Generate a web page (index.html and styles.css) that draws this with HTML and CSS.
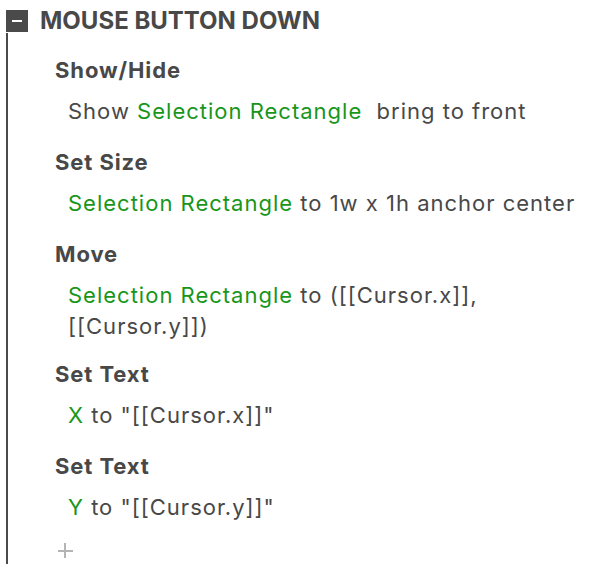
FILE: index.html
```html
<!DOCTYPE html>
<html>
<head>
<meta charset="utf-8">
<link rel="stylesheet" href="styles.css">
</head>
<body>
<div class="event">
  <div class="event-head">
    <span class="toggle"><span class="minus"></span></span>
    <span class="event-title">MOUSE BUTTON DOWN</span>
  </div>
  <div class="actions">
    <div class="action">
      <div class="action-name">Show/Hide</div>
      <div class="action-body">Show <span class="obj">Selection Rectangle</span>&nbsp; bring to front</div>
    </div>
    <div class="action">
      <div class="action-name">Set Size</div>
      <div class="action-body"><span class="obj">Selection Rectangle</span> to 1w x 1h anchor center</div>
    </div>
    <div class="action action-multiline">
      <div class="action-name">Move</div>
      <div class="action-body"><span class="obj">Selection Rectangle</span> to ([[Cursor.x]],<br>[[Cursor.y]])</div>
    </div>
    <div class="action">
      <div class="action-name">Set Text</div>
      <div class="action-body"><span class="obj">X</span> to "[[Cursor.x]]"</div>
    </div>
    <div class="action">
      <div class="action-name">Set Text</div>
      <div class="action-body"><span class="obj">Y</span> to "[[Cursor.y]]"</div>
    </div>
    <div class="add"><span class="plus"></span></div>
  </div>
</div>
</body>
</html>
```
FILE: styles.css
```css
html, body {
  margin: 0;
  padding: 0;
  background: #ffffff;
}
body {
  font-family: Inter, "Noto Sans", sans-serif;
  color: #484848;
  width: 592px;
  height: 564px;
  overflow: hidden;
}
.event {
  height: 100%;
  display: flex;
  flex-direction: column;
}
.event-head {
  display: flex;
  align-items: center;
  padding-top: 8px;
  height: 25px;
  flex: none;
}
.toggle {
  width: 22px;
  height: 22px;
  margin-left: 6px;
  background: #4a4a4a;
  display: flex;
  align-items: center;
  justify-content: center;
}
.minus {
  width: 10px;
  height: 2px;
  background: #ffffff;
}
.event-title {
  margin-left: 12px;
  font-size: 24px;
  font-weight: 700;
  line-height: 28px;
}
.actions {
  flex: 1;
  min-height: 0;
  margin-left: 6px;
  border-left: 2px solid #4a4a4a;
  padding-left: 47px;
  padding-top: 22px;
}
.action {
  margin-bottom: 20px;
}
.action-multiline {
  margin-bottom: 17px;
}
.action:last-of-type {
  margin-bottom: 0;
}
.action-name {
  font-size: 22px;
  font-weight: 700;
  line-height: 30px;
  letter-spacing: 0.9px;
}
.action-body {
  font-size: 22px;
  line-height: 31px;
  letter-spacing: 1px;
  padding-left: 13px;
  margin-top: 11px;
}
.obj {
  color: #17961a;
}
.add {
  margin-left: 3px;
  margin-top: 15px;
  width: 15px;
  height: 15px;
  position: relative;
}
.plus {
  display: block;
  position: absolute;
  inset: 0;
}
.plus::before, .plus::after {
  content: "";
  position: absolute;
  background: #b4b4b4;
}
.plus::before {
  left: 0;
  right: 0;
  top: 7px;
  height: 2px;
}
.plus::after {
  top: 0;
  bottom: 0;
  left: 6px;
  width: 2px;
}
```
